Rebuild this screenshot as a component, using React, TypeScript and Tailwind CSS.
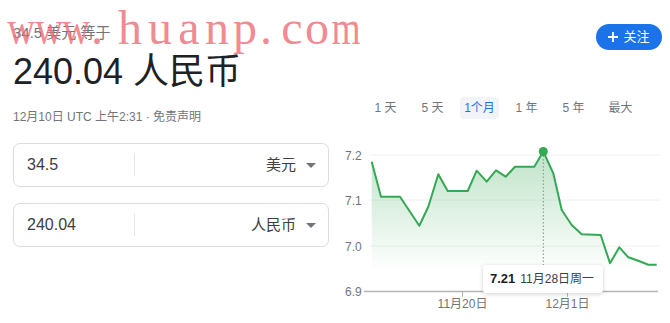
import React from "react";

const POINTS: [number, number][] = [
  [371.7, 161.7],
  [381, 196.7],
  [400, 196.7],
  [419.3, 225.7],
  [428.3, 206.7],
  [438.3, 174.3],
  [447.7, 191],
  [467.7, 191],
  [476.7, 170.7],
  [486.7, 181.7],
  [496, 170.3],
  [505.7, 176.7],
  [515, 166.7],
  [534.3, 166.7],
  [543.3, 151.5],
  [553.3, 173.3],
  [561.7, 210],
  [571.7, 225],
  [581.7, 234.3],
  [600.7, 235],
  [610, 263.3],
  [619.3, 247.3],
  [628.3, 257.3],
  [638.3, 260.7],
  [648.3, 264.7],
  [656.7, 264.7],
];

const TABS = ["1 天", "5 天", "1个月", "1 年", "5 年", "最大"];

// watermark letters, each centred on its measured x
const MARK = [
  { ch: "w", cls: "left-[21px] scale-x-[0.8]" },
  { ch: "w", cls: "left-[49px] scale-x-[0.8]" },
  { ch: "w", cls: "left-[76px] scale-x-[0.8]" },
  { ch: ".", cls: "left-[97px]" },
  { ch: "h", cls: "left-[130px]" },
  { ch: "u", cls: "left-[160px]" },
  { ch: "a", cls: "left-[189px]" },
  { ch: "n", cls: "left-[217px]" },
  { ch: "p", cls: "left-[245px]" },
  { ch: ".", cls: "left-[266px]" },
  { ch: "c", cls: "left-[292px]" },
  { ch: "o", cls: "left-[317px]" },
  { ch: "m", cls: "left-[346px] scale-x-[0.78]" },
];

function Caret() {
  return (
    <svg width="10" height="5" viewBox="0 0 10 5" className="ml-[10px]">
      <polygon points="0,0 10,0 5,5" fill="#70757a" />
    </svg>
  );
}

function CurrencyBox({ value, unit }: { value: string; unit: string }) {
  return (
    <div className="flex items-center h-[44px] w-[316px] rounded-[7px] border border-[#dadce0]">
      <div className="w-[120px] pl-[13px] text-[16px] text-[#3c4043]">{value}</div>
      <div className="w-px h-[22px] bg-[#e3e5e8]" />
      <div className="flex-1 flex items-center justify-end pr-[12px] text-[15px] text-[#3c4043]">
        {unit}
        <Caret />
      </div>
    </div>
  );
}

function Chart() {
  const line = POINTS.map((p) => p.join(",")).join(" ");
  const area = `${line} 656.7,291 371.7,291`;
  return (
    <div className="relative mt-[21px] h-[183px]">
      <svg width="335" height="183" viewBox="335 140 335 183" className="block">
        <defs>
          <linearGradient id="fill" x1="0" y1="150" x2="0" y2="272" gradientUnits="userSpaceOnUse">
            <stop offset="0" stopColor="#34a853" stopOpacity="0.32" />
            <stop offset="1" stopColor="#34a853" stopOpacity="0" />
          </linearGradient>
        </defs>
        {[155, 200, 246].map((y) => (
          <line key={y} x1="370" x2="660" y1={y} y2={y} stroke="#f0f0f0" strokeWidth="1" />
        ))}
        <polygon points={area} fill="url(#fill)" />
        <polyline points={line} fill="none" stroke="#34a853" strokeWidth="2" strokeLinejoin="round" />
        <line x1="543.3" x2="543.3" y1="152" y2="266" stroke="#8a8a8a" strokeWidth="1" strokeDasharray="1.5 2" />
        <circle cx="543.3" cy="151.5" r="4.5" fill="#34a853" />
        <line x1="364" x2="658" y1="291.5" y2="291.5" stroke="#b4b4b4" strokeWidth="1.6" />
        <line x1="462.5" x2="462.5" y1="291" y2="297" stroke="#b4b4b4" strokeWidth="1" />
        <line x1="567.5" x2="567.5" y1="291" y2="297" stroke="#b4b4b4" strokeWidth="1" />
        <g fill="#70757a" fontSize="12" fontFamily="Liberation Sans, Noto Sans CJK SC, sans-serif">
          <text x="345" y="159.5">7.2</text>
          <text x="345" y="204.5">7.1</text>
          <text x="345" y="250.5">7.0</text>
          <text x="345" y="296">6.9</text>
          <text x="462.5" y="307.5" textAnchor="middle">11月20日</text>
          <text x="567.5" y="307.5" textAnchor="middle">12月1日</text>
        </g>
      </svg>
      <div className="absolute left-[148px] top-[125px] h-[28px] w-[120px] flex items-center gap-[5px] px-[7px] whitespace-nowrap bg-white rounded-[3px] shadow-[0_1px_4px_rgba(0,0,0,0.18)]">
        <span className="text-[13px] font-bold text-[#202124]">7.21</span>
        <span className="text-[12px] text-[#3c4043]">11月28日周一</span>
      </div>
    </div>
  );
}

export default function App() {
  return (
    <div className="relative w-[670px] h-[323px] overflow-hidden bg-white flex font-['Liberation_Sans','Noto_Sans_CJK_SC',sans-serif]">
      <div className="w-[335px] pl-[13px]">
        <div className="mt-[23px] text-[15px] leading-[20px] text-[#70757a]">34.5 美元 等于</div>
        <div className="mt-[7px] text-[36px] leading-[44px] text-[#202124]">240.04 人民币</div>
        <div className="mt-[15px] text-[12px] leading-[16px] text-[#70757a]">12月10日 UTC 上午2:31 · 免责声明</div>
        <div className="mt-[18px]">
          <CurrencyBox value="34.5" unit="美元" />
        </div>
        <div className="mt-[16px]">
          <CurrencyBox value="240.04" unit="人民币" />
        </div>
      </div>

      <div className="flex-1 flex flex-col">
        <button className="self-end mt-[24px] mr-[8px] h-[26px] w-[66px] rounded-full bg-[#1a73e8] text-white text-[13px] flex items-center justify-center gap-[5px]">
          <svg width="10" height="10" viewBox="0 0 10 10">
            <path d="M5 0v10M0 5h10" stroke="white" strokeWidth="1.8" />
          </svg>
          关注
        </button>
        <div className="mt-[47px] ml-[27px] flex">
          {TABS.map((t) => (
            <div key={t} className="w-[47px] h-[22px] flex items-center justify-center">
              <span
                className={
                  t === "1个月"
                    ? "h-[22px] px-[4px] flex items-center rounded-[4px] bg-[#f2f4fa] text-[12px] text-[#1a73e8]"
                    : "text-[12px] text-[#70757a]"
                }
              >
                {t}
              </span>
            </div>
          ))}
        </div>
        <Chart />
      </div>

      <div className="absolute inset-0 pointer-events-none font-['Liberation_Serif',serif] text-[48px] leading-none text-[#ee6a74]/80">
        {MARK.map((m, i) => (
          <span key={i} className={`absolute top-[4px] -translate-x-1/2 ${m.cls}`}>
            {m.ch}
          </span>
        ))}
      </div>
    </div>
  );
}
